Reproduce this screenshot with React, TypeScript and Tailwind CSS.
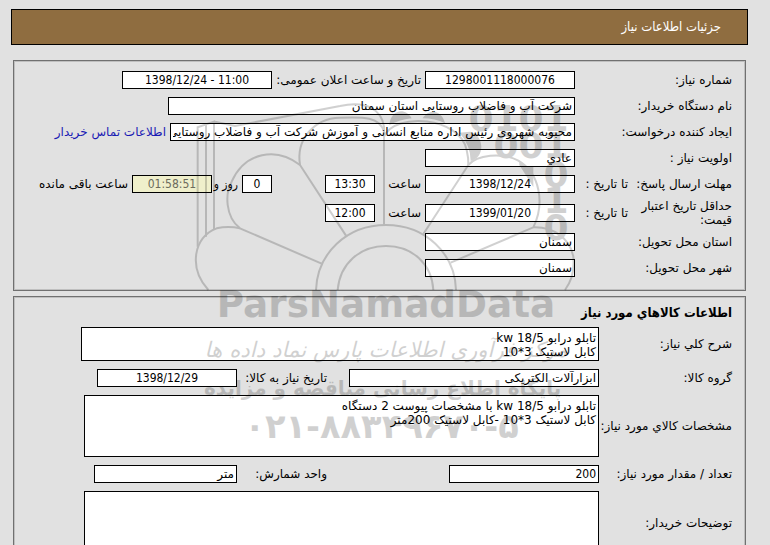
import type { ReactNode } from "react";

const box = "border border-black bg-white text-black px-0.5 outline-none min-w-0";
const narrow = "font-['DejaVu_Sans_Condensed','DejaVu_Sans',sans-serif]";
const panel = "border border-[#707070] bg-[#e1e1e1] pr-[13px] pb-[9px] shadow-[inset_0_0_0_1px_#bfbfbf]";

function Field({
  id,
  value,
  className,
  center,
}: {
  id: string;
  value: string;
  className: string;
  center?: boolean;
}) {
  return (
    <input
      id={id}
      readOnly
      dir={center ? "ltr" : "rtl"}
      defaultValue={value}
      className={`${box} h-[18px] ${center ? `text-center ${narrow}` : "text-right"} ${className}`}
    />
  );
}

function Row({ id, label, wide, children }: { id: string; label: string; wide?: boolean; children: ReactNode }) {
  return (
    <div className="flex min-h-[26px] items-center py-0.5">
      <label
        htmlFor={id}
        className={wide ? "w-[157px] shrink-0 whitespace-nowrap" : "w-[133px] shrink-0 whitespace-nowrap"}
      >
        {label}
      </label>
      {children}
    </div>
  );
}

function DeadlineRow({
  id,
  label,
  date,
  time,
  children,
}: {
  id: string;
  label: string;
  date: string;
  time: string;
  children?: ReactNode;
}) {
  return (
    <div className="flex min-h-[26px] items-center py-0.5">
      <label htmlFor={id} className="w-[104px] shrink-0">
        {label}
      </label>
      <span className="w-[53px] shrink-0 whitespace-nowrap">تا تاریخ :</span>
      <Field id={id} value={date} center className="w-[150px]" />
      <label htmlFor={`${id}-time`} className="mr-1 w-[46px] shrink-0">
        ساعت
      </label>
      <Field id={`${id}-time`} value={time} center className="w-[50px]" />
      {children}
    </div>
  );
}

function Watermark() {
  return (
    <svg
      viewBox="0 0 1140 1080"
      className="pointer-events-none absolute top-[90px] left-[190px] h-[360px] w-[380px] overflow-visible opacity-[0.18]"
      aria-hidden="true"
    >
      <g fill="none" stroke="#000" strokeWidth="6">
        <path d="M23 470V112L72 95V420M48 440V104M75 95l60 13L450 48C530 30 575 60 582 110V405" />
        <path d="M468 437L330 225C318 150 370 85 450 83C520 80 570 80 582 125" />
        <path d="M395 521L150 415C105 380 105 310 125 275C165 185 260 170 330 225" />
        <path d="M55 600C-5 535 10 440 80 415Q115 407 150 415" />
        <path d="M582 140C615 65 810 80 830 180Q836 205 835 225" />
        <path d="M700 432L835 225C860 195 935 185 985 212C1050 250 1065 340 1030 412L782 518" />
        <path d="M1030 412C1090 410 1140 445 1150 500C1155 550 1140 580 1125 600" />
        <path d="M378 600C382 490 470 405 588 405S795 490 798 600" />
        <path d="M443 600C450 520 510 468 588 468S725 520 730 600" />
      </g>
      <path d="M598 105C602 60 645 50 665 85Q625 90 598 105ZM698 85C720 50 758 65 765 100Q735 85 698 85Z" />
      <path d="M840 125C885 135 885 205 842 213Q842 165 808 128ZM988 215V225L1030 291V228H1008Z" />
      <g className="font-['DejaVu_Sans'] font-bold" direction="ltr" textAnchor="end" fontSize="108">
        <text x="1136" y="122">
          0101
        </text>
        <text x="1136" y="205">
          001
        </text>
        <text x="1136" y="290">
          0
        </text>
        <text x="1136" y="370">
          1
        </text>
        <text x="1136" y="450">
          0
        </text>
      </g>
      <g textAnchor="middle">
        <text x="588" y="681" direction="ltr" fontSize="112" className="font-['DejaVu_Sans'] font-bold">
          ParsNamadData
        </text>
        <text x="588" y="800" direction="rtl" fontSize="64" className="font-['DejaVu_Sans'] italic">
          مرکز فرآوری اطلاعات پارس نماد داده ها
        </text>
        <text x="578" y="915" direction="rtl" fontSize="60" className="font-['DejaVu_Sans'] font-bold">
          پایگاه اطلاع رسانی مناقصه و مزایده
        </text>
        <text
          x="575"
          y="1043"
          direction="ltr"
          fontSize="101"
          className="font-['DejaVu_Sans'] font-bold [unicode-bidi:bidi-override]"
        >
          ۰۲۱-۸۸۳۴۹۶۷۰-۵
        </text>
      </g>
    </svg>
  );
}

export default function App() {
  return (
    <div
      dir="rtl"
      className="relative min-h-screen bg-[#e1e1e1] pt-[9px] pr-[22px] pl-[11px] font-['DejaVu_Sans',sans-serif] text-[12px] leading-[14px] text-black"
    >
      <header className="flex h-9 items-center border border-black bg-[#8f6d40] px-[26px] text-white">
        <h1 className={`text-[13px] ${narrow}`}>جزئیات اطلاعات نیاز</h1>
      </header>

      <main className="mt-[15px] mr-0.5 ml-0.5">
        <section className={`pt-1.5 ${panel}`}>
          <Row id="number" label="شماره نیاز:" wide>
            <Field id="number" value="1298001118000076" center className="w-[150px]" />
            <label htmlFor="announced" className="mx-1 w-[145px] shrink-0 whitespace-nowrap">
              تاریخ و ساعت اعلان عمومی:
            </label>
            <Field id="announced" value="1398/12/24 - 11:00" center className="w-[150px]" />
          </Row>
          <Row id="buyer" label="نام دستگاه خریدار:" wide>
            <Field id="buyer" value="شرکت آب و فاضلاب روستایی استان سمنان" className="w-[407px]" />
          </Row>
          <Row id="creator" label="ایجاد کننده درخواست:" wide>
            <Field
              id="creator"
              value="محبوبه شهروی رئیس اداره منابع انسانی و آموزش شرکت آب و فاضلاب روستایی استان سمنان"
              className="w-[405px]"
            />
            <a href="#contact" className="mr-1 whitespace-nowrap text-[#1a1ab4]">
              اطلاعات تماس خریدار
            </a>
          </Row>
          <Row id="priority" label="اولویت نیاز :" wide>
            <Field id="priority" value="عادي" className="w-[150px]" />
          </Row>
          <DeadlineRow id="reply" label="مهلت ارسال پاسخ:" date="1398/12/24" time="13:30">
            <Field id="days" value="0" center className="mr-[53px] w-[30px]" />
            <label htmlFor="days" className={`mr-1 w-[26px] shrink-0 whitespace-nowrap ${narrow}`}>
              روز و
            </label>
            <input
              id="left"
              readOnly
              dir="ltr"
              defaultValue="01:58:51"
              className={`h-[18px] w-20 min-w-0 border border-black bg-[#efefcb] text-center text-[#6b6b5c] outline-none ${narrow}`}
            />
            <label htmlFor="left" className="mr-1 whitespace-nowrap">
              ساعت باقی مانده
            </label>
          </DeadlineRow>
          <DeadlineRow id="validity" label="حداقل تاریخ اعتبار قیمت:" date="1399/01/20" time="12:00" />
          <Row id="province" label="استان محل تحویل:" wide>
            <Field id="province" value="سمنان" className="w-[150px]" />
          </Row>
          <Row id="city" label="شهر محل تحویل:" wide>
            <Field id="city" value="سمنان" className="w-[150px]" />
          </Row>
        </section>

        <section className={`mt-[5px] pt-[9px] ${panel}`}>
          <h2 className={`mb-[3px] text-[13px] leading-[14px] font-bold ${narrow}`}>اطلاعات کالاهاي مورد نیاز</h2>
          <Row id="summary" label="شرح کلي نیاز:">
            <textarea
              id="summary"
              readOnly
              defaultValue={"تابلو درابو 18/5 kw\nکابل لاستیک 3*10"}
              className={`${box} my-0.5 h-[34px] w-[518px] resize-none overflow-hidden pt-[3px]`}
            />
          </Row>
          <Row id="group" label="گروه کالا:">
            <Field id="group" value="ابزارآلات الکتریکی" className="w-[250px]" />
            <label htmlFor="needed" className="mr-[22px] w-[90px] shrink-0 whitespace-nowrap">
              تاریخ نیاز به کالا:
            </label>
            <Field id="needed" value="1398/12/29" center className="w-[140px]" />
          </Row>
          <Row id="specs" label="مشخصات کالاي مورد نیاز:">
            <textarea
              id="specs"
              readOnly
              defaultValue={"تابلو درابو 18/5 kw با مشخصات پیوست 2 دستگاه\nکابل لاستیک 3*10 -کابل لاستیک 200متر"}
              className={`${box} my-0.5 h-[62px] w-[515px] resize-none overflow-hidden pt-[3px]`}
            />
          </Row>
          <Row id="quantity" label="تعداد / مقدار مورد نیاز:">
            <Field id="quantity" value="200" className={`w-[150px] ${narrow}`} />
            <label htmlFor="unit" className="mr-[122px] w-[90px] shrink-0 whitespace-nowrap">
              واحد شمارش:
            </label>
            <Field id="unit" value="متر" className="w-[143px]" />
          </Row>
          <Row id="notes" label="توضیحات خریدار:">
            <textarea id="notes" readOnly className={`${box} my-0.5 h-16 w-[515px] resize-none overflow-hidden`} />
          </Row>
        </section>
      </main>

      <Watermark />
    </div>
  );
}
